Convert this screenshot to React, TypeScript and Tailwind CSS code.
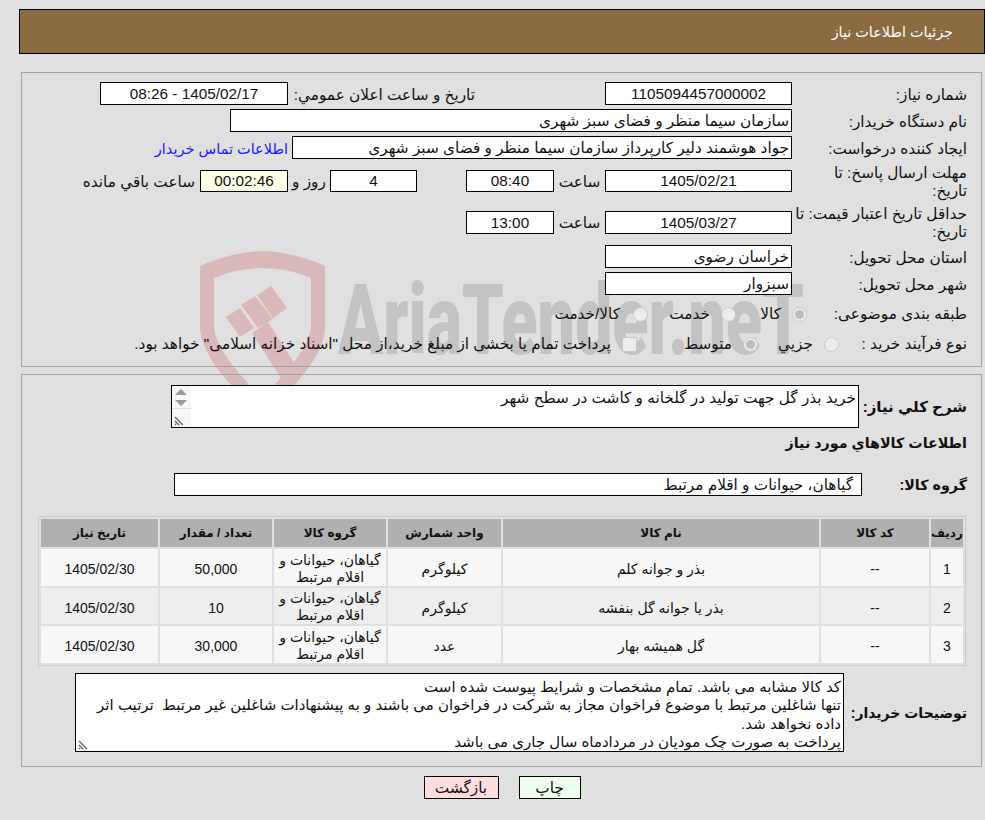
const items = [
  { id: 1, name: 'بذر و جوانه کلم', unit: 'کیلوگرم', qty: '50,000' },
  { id: 2, name: 'بذر یا جوانه گل بنفشه', unit: 'کیلوگرم', qty: '10' },
  { id: 3, name: 'گل همیشه بهار', unit: 'عدد', qty: '30,000' },
]

function Box({ className = 'bg-white', children }: { className?: string; children?: React.ReactNode }) {
  return (
    <div className={`h-[23px] shrink-0 border border-black flex items-center px-[2px] pt-[1px] whitespace-nowrap overflow-hidden ${className}`}>
      {children}
    </div>
  )
}

function Radio({ checked }: { checked?: boolean }) {
  return (
    <span className="w-[15px] h-[15px] shrink-0 rounded-full border border-[#c8c8c8] bg-[#ececec] flex items-center justify-center">
      {checked && <span className="w-[9px] h-[9px] rounded-full bg-[#bdbdbd]"></span>}
    </span>
  )
}

function Resizer() {
  return (
    <svg className="absolute left-[2px] bottom-[1px]" width="12" height="12" viewBox="0 0 12 12">
      <path d="M1 3l8 8M1 7l4 4M1 10l1 1" stroke="#666" strokeWidth="1.4" fill="none" />
    </svg>
  )
}

function Watermark() {
  return (
    <div dir="ltr" className="absolute left-0 top-0">
      <svg width="985" height="440" viewBox="0 0 985 440">
        <path
          fill="#d9b8ba"
          fillRule="evenodd"
          d="M200 266Q232 252 262 251Q294 252 325 266V330Q322 365 262 415Q204 365 200 330ZM214 278V328Q216 352 262 398Q308 352 311 328V278Q288 268 262 268Q238 268 214 278Z"
        />
        <path fill="#d9b8ba" d="M226 317L240 308L254 328L240 337ZM241 305L255 296L273 319L258 328ZM257 295L271 286L287 308L273 318ZM252 333L268 322L300 372L284 383Z" />
        <text x="338" y="354" direction="ltr" textLength="466" lengthAdjust="spacingAndGlyphs" fontFamily="Roboto, sans-serif" fontWeight="900" fontSize="98" fill="#c3c3c3">
          AriaTender.neT
        </text>
      </svg>
    </div>
  )
}

export default function App() {
  return (
    <div dir="rtl" className="relative w-[985px] h-[820px] overflow-hidden bg-[#e0e0e0] text-[15.3px] leading-[18px] text-[#111] font-['Liberation_Sans','DejaVu_Sans',sans-serif]">
      <Watermark />
      <div className="relative">
        <div className="ml-[19px] mr-0 mt-[9px] h-[45px] border border-black bg-[#8b6b41] text-white text-[14.4px] flex items-center pr-[31px]">
          جزئيات اطلاعات نياز
        </div>

        {/* main form */}
        <div className="ml-[21px] mr-[3px] mt-[18px] h-[295px] border border-[#a3a3a3] pt-[9px] pr-[14px]">
          <div className="flex items-center">
            <div className="w-[175px] pt-[2px]">شماره نياز:</div>
            <Box className="w-[187px] bg-white justify-center">1105094457000002</Box>
            <div className="w-[187px] mr-[130px] pt-[2px]">تاریخ و ساعت اعلان عمومي:</div>
            <Box className="w-[188px] bg-white justify-center">1405/02/17 - 08:26</Box>
          </div>
          <div className="flex items-center mt-[4px]">
            <div className="w-[175px] pt-[2px]">نام دستگاه خریدار:</div>
            <Box className="w-[562px] bg-white">سازمان سیما منظر و فضای سبز شهری</Box>
          </div>
          <div className="flex items-center mt-[4px]">
            <div className="w-[175px] pt-[2px]">ایجاد کننده درخواست:</div>
            <Box className="w-[500px] bg-white">جواد هوشمند دلیر کارپرداز سازمان سیما منظر و فضای سبز شهری</Box>
            <a className="mr-[4px] pt-[2px] text-[14.5px] text-[#1a1aff]">اطلاعات تماس خریدار</a>
          </div>
          <div className="flex items-center h-[41px] mt-[1px]">
            <div className="w-[175px] pt-[2px]">مهلت ارسال پاسخ: تا<br />تاریخ:</div>
            <Box className="w-[187px] !h-[22px] bg-white justify-center">1405/02/21</Box>
            <div className="w-[51px] pt-[2px] text-center">ساعت</div>
            <Box className="w-[88px] !h-[22px] bg-white justify-center">08:40</Box>
            <Box className="w-[87px] !h-[22px] mr-[49px] bg-white justify-center">4</Box>
            <div className="w-[42px] pt-[2px] text-center">روز و</div>
            <Box className="w-[88px] !h-[22px] justify-center bg-[#ffffe8]">00:02:46</Box>
            <div className="mr-[5px] pt-[2px]">ساعت باقي مانده</div>
          </div>
          <div className="flex items-center h-[40px] mt-[1px]">
            <div className="w-[175px] pt-[2px]">حداقل تاریخ اعتبار قیمت: تا<br />تاریخ:</div>
            <Box className="w-[187px] bg-white justify-center">1405/03/27</Box>
            <div className="w-[51px] pt-[2px] text-center">ساعت</div>
            <Box className="w-[88px] bg-white justify-center">13:00</Box>
          </div>
          <div className="flex items-center mt-[3px]">
            <div className="w-[175px] pt-[2px]">استان محل تحویل:</div>
            <Box className="w-[187px] bg-white">خراسان رضوی</Box>
          </div>
          <div className="flex items-center mt-[4px]">
            <div className="w-[175px] pt-[2px]">شهر محل تحویل:</div>
            <Box className="w-[187px] bg-white">سبزوار</Box>
          </div>
          <div className="flex items-center h-[26px] mt-[6px]">
            <div className="w-[160px]">طبقه بندی موضوعی:</div>
            <div className="w-[71px] flex items-center gap-[11px]"><Radio checked /><span>کالا</span></div>
            <div className="w-[88px] flex items-center gap-[11px]"><Radio /><span>خدمت</span></div>
            <div className="flex items-center gap-[13px]"><Radio /><span>کالا/خدمت</span></div>
          </div>
          <div className="flex items-center h-[26px] mt-[4px]">
            <div className="w-[128px]">نوع فرآیند خرید :</div>
            <div className="w-[81px] flex items-center gap-[11px]"><Radio /><span>جزيي</span></div>
            <div className="w-[121px] flex items-center gap-[11px]"><Radio checked /><span>متوسط</span></div>
            <div className="flex items-center gap-[11px]">
              <span className="w-[15px] h-[15px] shrink-0 rounded-[2px] border border-[#c8c8c8] bg-[#ececec]"></span>
              <span>پرداخت تمام یا بخشی از مبلغ خرید،از محل "اسناد خزانه اسلامی" خواهد بود.</span>
            </div>
          </div>
        </div>

        {/* items */}
        <div className="ml-[21px] mr-[3px] mt-[7px] h-[393px] border border-[#a3a3a3] pt-[10px] pr-[14px]">
          <div className="flex items-center">
            <div className="w-[108px] text-[15px] font-bold">شرح کلي نیاز:</div>
            <div className="relative w-[688px] h-[43px] border border-black bg-white px-[2px] pt-[3px]">
              خرید بذر گل جهت تولید در گلخانه و کاشت در سطح شهر
              <div className="absolute left-0 top-0 bottom-0 w-[19px] bg-[#f7f7f7]">
                <svg className="absolute left-[3px] top-[2px]" width="12" height="20" viewBox="0 0 12 20">
                  <path d="M6 1l6 6H0zM0 12h12l-6 6z" fill="#9a9a9a" />
                </svg>
                <div className="absolute left-0 right-0 top-[22px] border-t border-[#ddd]"></div>
                <Resizer />
              </div>
            </div>
          </div>
          <div className="text-[14.3px] font-bold mt-[6px] h-[18px]">اطلاعات کالاهاي مورد نیاز</div>
          <div className="flex items-center mt-[21px]">
            <div className="w-[105px] text-[14.3px] font-bold">گروه کالا:</div>
            <Box className="w-[688px] bg-white pr-[8px]">گیاهان، حیوانات و اقلام مرتبط</Box>
          </div>
          <table className="mt-[20px] mr-[1px] w-[928px] table-fixed border border-[#ccc] border-separate border-spacing-[2px] text-center text-[14px]">
            <colgroup>
              <col className="w-[32px]" />
              <col className="w-[108px]" />
              <col className="w-[316px]" />
              <col className="w-[113px]" />
              <col className="w-[112px]" />
              <col className="w-[112px]" />
              <col className="w-[117px]" />
            </colgroup>
            <thead>
              <tr className="h-[28px] bg-[#b0b0b0] text-[12px] font-bold">
                <th className="p-0">ردیف</th>
                <th className="p-0">کد کالا</th>
                <th className="p-0">نام کالا</th>
                <th className="p-0">واحد شمارش</th>
                <th className="p-0">گروه کالا</th>
                <th className="p-0">تعداد / مقدار</th>
                <th className="p-0">تاریخ نیاز</th>
              </tr>
            </thead>
            <tbody>
              {items.map((item) => (
                <tr key={item.id} className={item.id === 2 ? 'h-[36px] bg-[#eeeeee]' : 'h-[37px] bg-[#f7f7f7]'}>
                  <td className="p-0 pt-[3px]">{item.id}</td>
                  <td className="p-0 pt-[3px]">--</td>
                  <td className="p-0 pt-[3px]">{item.name}</td>
                  <td className="p-0 pt-[3px]">{item.unit}</td>
                  <td className="p-0 pt-[2px] leading-[17px]">گیاهان، حیوانات و<br />اقلام مرتبط</td>
                  <td className="p-0 pt-[3px]">{item.qty}</td>
                  <td className="p-0 pt-[3px]">1405/02/30</td>
                </tr>
              ))}
            </tbody>
          </table>
          <div className="flex items-center mt-[7px]">
            <div className="w-[123px] text-[14px] font-bold whitespace-nowrap">توضیحات خریدار:</div>
            <div className="relative w-[769px] h-[79px] border border-black bg-white px-[2px] pt-[4px] text-[15px] leading-[18.3px] whitespace-pre-wrap">
              کد کالا مشابه می باشد. تمام مشخصات و شرایط پیوست شده است<br />
              {'تنها شاغلین مرتبط با موضوع فراخوان مجاز به شرکت در فراخوان می باشند و به پیشنهادات شاغلین غیر مرتبط  ترتیب اثر'}<br />
              داده نخواهد شد.<br />
              پرداخت به صورت چک مودیان در مردادماه سال جاری می باشد
              <Resizer />
            </div>
          </div>
        </div>

        <div className="ml-[19px] mt-[9px] flex justify-center gap-[20px]">
          <button className="w-[62px] h-[23px] border border-black bg-[#eeffee]">چاپ</button>
          <button className="w-[75px] h-[23px] border border-black bg-[#ffdddd]">بازگشت</button>
        </div>
      </div>
    </div>
  )
}
